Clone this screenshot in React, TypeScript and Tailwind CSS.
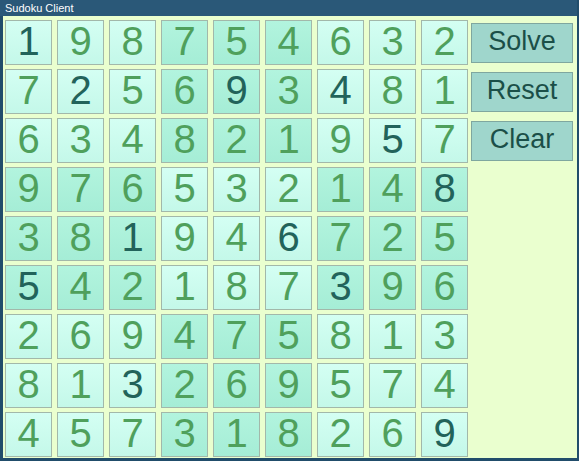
const grid = [
  "198754632",
  "725693481",
  "634821957",
  "976532148",
  "381946725",
  "542187396",
  "269475813",
  "813269574",
  "457318269",
];

// cells that came with the puzzle (drawn darker)
const givens = new Set([
  "0-0",
  "1-1",
  "1-4",
  "1-6",
  "2-7",
  "3-8",
  "4-2",
  "4-5",
  "5-0",
  "5-6",
  "7-2",
  "8-8",
]);

function Cell({ value, r, c }: { value: string; r: number; c: number }) {
  const dark = (Math.floor(r / 3) + Math.floor(c / 3)) % 2 === 1;
  const given = givens.has(`${r}-${c}`);
  return (
    <div
      className={
        "w-[47px] h-[45px] border border-[#a2b8aa] flex items-center justify-center pb-[4px] text-[40px] leading-none " +
        (dark
          ? "bg-gradient-to-b from-[#b2f4de] to-[#a5edd6] "
          : "bg-gradient-to-b from-[#d4fff3] to-[#c4f8e9] ") +
        (given ? "text-[#22635a]" : "text-[#4fa05c]")
      }
    >
      {value}
    </div>
  );
}

export default function App() {
  return (
    <div
      className="w-[579px] h-[461px] flex flex-col bg-[#214d6b] pl-[3px] pr-[2px] pb-[3px]"
      style={{ fontFamily: '"Liberation Sans", Arial, sans-serif' }}
    >
      <div className="h-[16px] -ml-[3px] pl-[5px] bg-[#2a5878] text-white text-[11px] leading-[16px]">
        Sudoku Client
      </div>

      <div className="flex-1 flex bg-[#eaffcf] pl-[2px] pt-[4px]">
        <div className="grid grid-cols-[repeat(9,47px)] auto-rows-[45px] gap-x-[5px] gap-y-[4px]">
          {grid.map((row, r) =>
            row.split("").map((v, c) => <Cell key={`${r}-${c}`} value={v} r={r} c={c} />)
          )}
        </div>

        <div className="flex flex-col gap-[9px] ml-[3px] mt-[3px]">
          {["Solve", "Reset", "Clear"].map((label) => (
            <button
              key={label}
              className="w-[102px] h-[40px] bg-[#9fd6cc] border border-[#7fa79f] text-[#1b4f48] text-[27px] leading-none pb-[3px]"
            >
              {label}
            </button>
          ))}
        </div>
      </div>
    </div>
  );
}
